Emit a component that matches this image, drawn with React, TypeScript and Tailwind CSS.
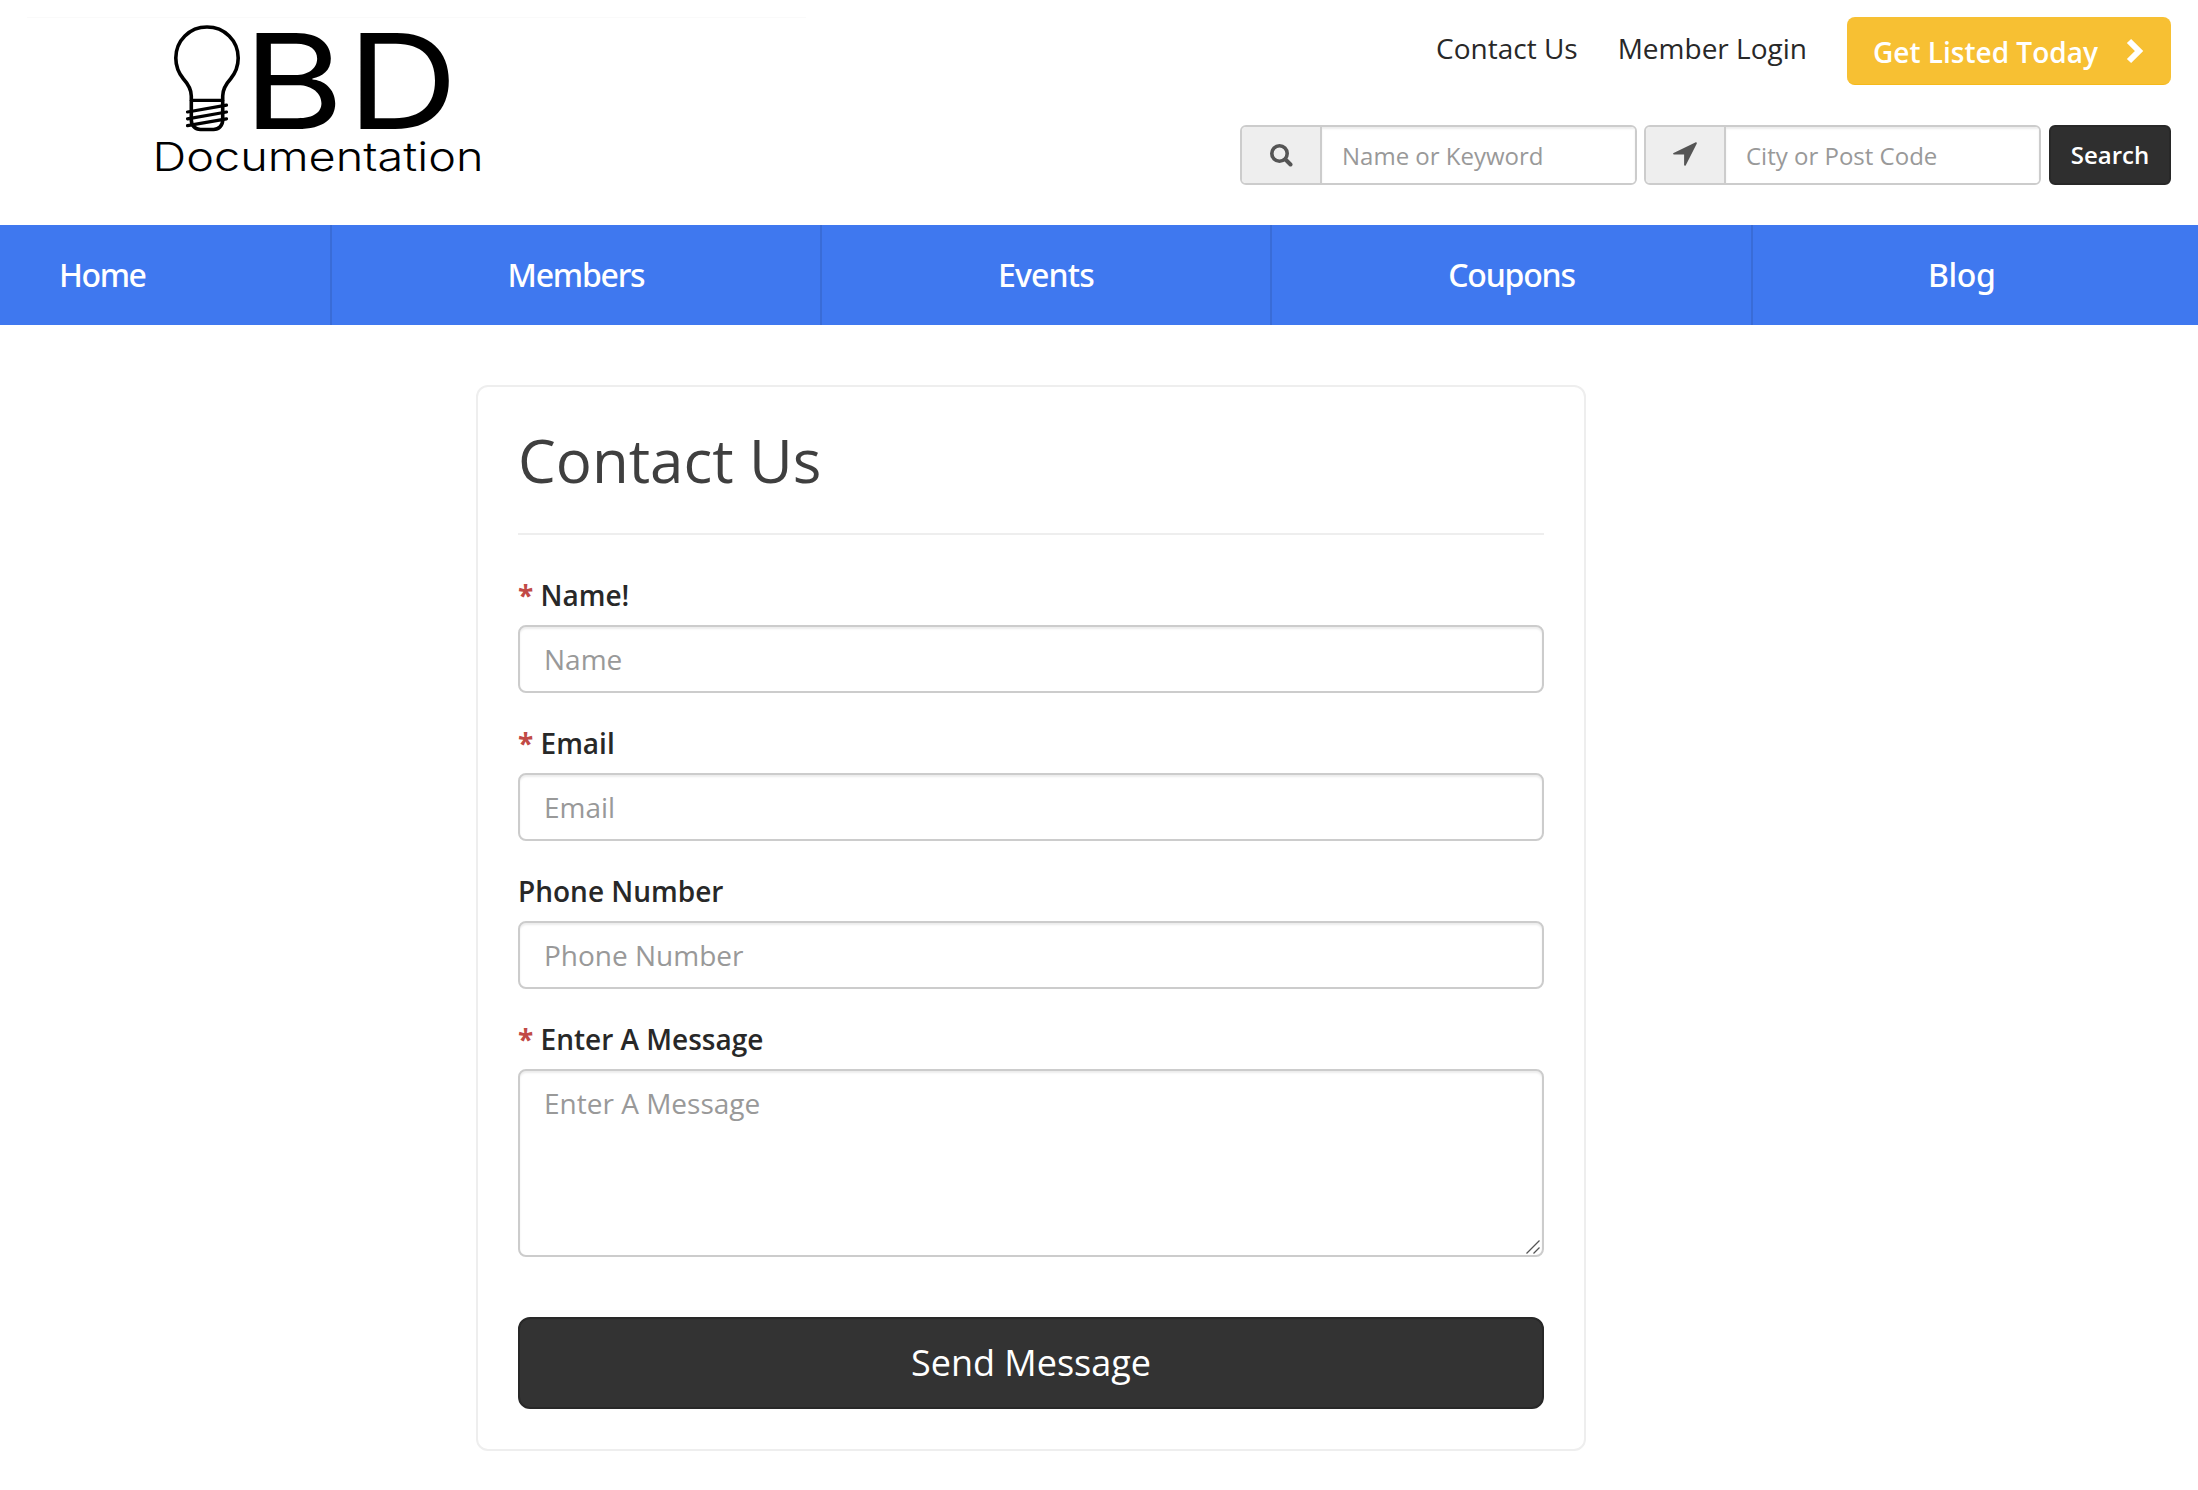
import React from 'react';

const navItems = [
  { label: 'Home', cell: 'w-[332px] pl-[59px] border-r-2', text: 'tracking-[-1.4px]' },
  { label: 'Members', cell: 'w-[490px] justify-center border-r-2', text: 'tracking-[-1.2px]' },
  { label: 'Events', cell: 'w-[450px] justify-center border-r-2', text: 'tracking-[-0.8px]' },
  { label: 'Coupons', cell: 'w-[481px] justify-center border-r-2', text: 'tracking-[-1.2px]' },
  { label: 'Blog', cell: 'flex-1 pl-[175px]', text: 'tracking-[-0.4px]' },
];

const fields = [
  { label: 'Name!', placeholder: 'Name', required: true },
  { label: 'Email', placeholder: 'Email', required: true },
  { label: 'Phone Number', placeholder: 'Phone Number', required: false },
];

function Logo() {
  return (
    <svg width="360" height="172" viewBox="0 8 360 172" className="block overflow-visible" fill="none">
      {/* Bulb */}
      <g stroke="#000" strokeWidth="3.6" strokeLinecap="round" strokeLinejoin="round">
        <path d="M51.3 90V86C51.3 79 48.500 74.500 43.500 69C38.500 63 35.800 56 35.800 48C35.800 30.500 49.500 17 67 17S98.200 30.500 98.200 48C98.200 56 95.500 63 90.500 69C85.500 74.500 82.700 79 82.700 86V110C82.700 115.500 79 119.500 73.500 119.500H60.500C55 119.500 51.300 115.500 51.300 110V90" />
        <path d="M51.3 90.400H82.700" strokeWidth="3.2" />
        <path d="M47.500 102L86.500 95.200M47.500 108.800L86.500 102M47.500 115.700L86.500 108.800" strokeWidth="3.2" />
      </g>
      <g fill="#000" className="font-['Inter']">
        <text x="103" y="119" fontSize="132" textLength="101" lengthAdjust="spacingAndGlyphs">B</text>
        <text x="207" y="119" fontSize="132" textLength="111" lengthAdjust="spacingAndGlyphs">D</text>
        <text x="12.500" y="161" fontSize="40" fontWeight="350" textLength="331" lengthAdjust="spacingAndGlyphs">Documentation</text>
      </g>
    </svg>
  );
}

function SearchInput({ icon, placeholder }: { icon: React.ReactNode; placeholder: string }) {
  return (
    <div className="flex w-[397px] h-[60px] rounded-[6px] border-2 border-[#ccc] overflow-hidden">
      <span className="w-[80px] shrink-0 flex items-center justify-center bg-[#eee] border-r-2 border-[#ccc]">
        {icon}
      </span>
      <input
        type="text"
        placeholder={placeholder}
        className="flex-1 min-w-0 px-5 pt-[2px] text-[24px] bg-white placeholder:text-[#999] shadow-[inset_0_2px_2px_rgba(0,0,0,0.075)] outline-none"
      />
    </div>
  );
}

function Header() {
  return (
    <header className="flex justify-between h-[225px] pr-[27px]">
      <div className="ml-[27px] mt-[17px] w-[779px] pl-[113px] border-t border-[#fafafa]">
        <Logo />
      </div>
      <div className="flex flex-col items-end pt-[17px]">
        <div className="flex h-[68px] text-[28px]">
          <a className="mt-[11px] mr-[40px] leading-[40px]">Contact Us</a>
          <a className="mt-[11px] mr-[40px] leading-[40px]">Member Login</a>
          <button className="flex items-center w-[324px] h-[68px] pl-[26px] rounded-[8px] bg-[#f7c033] border-b border-[#f5b91b] text-white font-semibold leading-[40px] whitespace-nowrap">
            <span className="w-[225px] pt-[2px] text-left">Get Listed Today</span>
            <svg width="18" height="26" viewBox="0 0 18 26" className="ml-[28px]" fill="none">
              <path d="M3 3L13 13L3 23" stroke="#fff" strokeWidth="6" />
            </svg>
          </button>
        </div>

        <div className="flex mt-[40px]">
          <SearchInput
            placeholder="Name or Keyword"
            icon={
              <svg width="24" height="24" viewBox="0 0 24 24" fill="none" stroke="#555">
                <circle cx="10.500" cy="10.500" r="7.700" strokeWidth="3.600" />
                <path d="M16.500 16.500L21.500 21.500" strokeWidth="4" strokeLinecap="round" />
              </svg>
            }
          />
          <div className="w-[7px]" />
          <SearchInput
            placeholder="City or Post Code"
            icon={
              <svg width="24" height="24" viewBox="0 0 24 24" className="-mt-[3px]" fill="#555">
                <path d="M23.500 0.500C23.900 0.800 23.900 1.200 23.700 1.700L12.800 23.200C12.300 24 11.200 23.800 11.100 22.900V12.600H1C0 12.400 -0.200 11.500 0.600 11L22.300 0.400C22.800 0.200 23.200 0.200 23.500 0.500Z" />
              </svg>
            }
          />
          <button className="ml-[8px] w-[122px] h-[60px] rounded-[6px] bg-[#2f2f2f] border-2 border-[#282828] text-white text-[24px] font-semibold">
            Search
          </button>
        </div>
      </div>
    </header>
  );
}

function NavBar() {
  return (
    <nav className="flex h-[100px] bg-[#3f78ef] text-white text-[32px] font-medium font-['Noto_Sans']">
      {navItems.map((item) => (
        <a key={item.label} className={`flex items-center border-[#396cd7] ${item.cell}`}>
          <span className={item.text}>{item.label}</span>
        </a>
      ))}
    </nav>
  );
}

function FieldLabel({ label, required }: { label: string; required: boolean }) {
  return (
    <label className="block mb-[10px] text-[28px] leading-[40px] font-semibold">
      {required && <span className="font-bold text-[#c14a46]">* </span>}
      {label}
    </label>
  );
}

function ContactForm() {
  return (
    <form className="w-[1110px] h-[1066px] ml-[476px] mt-[60px] px-[40px] border-2 border-[#eee] rounded-[12px]">
      <h1 className="h-[146px] pt-[32px] text-[60px] leading-[82px] text-[#3f3f3f]">Contact Us</h1>
      <hr className="border-0 h-[2px] bg-[#eee] mb-[40px]" />

      {fields.map((field) => (
        <div key={field.label} className="mb-[30px]">
          <FieldLabel label={field.label} required={field.required} />
          <input
            type="text"
            placeholder={field.placeholder}
            className="block w-full h-[68px] px-[24px] text-[28px] rounded-[8px] border-2 border-[#ccc] placeholder:text-[#999] shadow-[inset_0_2px_2px_rgba(0,0,0,0.075)] outline-none"
          />
        </div>
      ))}

      <FieldLabel label="Enter A Message" required />
      <div className="relative">
        <textarea
          placeholder="Enter A Message"
          className="block w-full h-[188px] px-[24px] py-[12px] text-[28px] leading-[40px] resize-none rounded-[8px] border-2 border-[#ccc] placeholder:text-[#999] shadow-[inset_0_2px_2px_rgba(0,0,0,0.075)] outline-none"
        />
        {/* Resize grip */}
        <svg width="14" height="14" viewBox="0 0 14 14" className="absolute right-[4px] bottom-[3px]" stroke="#555" strokeWidth="1.300">
          <path d="M0.500 13.500L13.500 0.500M7.500 13.500L13.500 7.500" />
        </svg>
      </div>

      <button className="block w-full h-[92px] mt-[60px] rounded-[12px] bg-[#333] border-2 border-[#282828] text-white text-[36px]">
        Send Message
      </button>
    </form>
  );
}

export default function App() {
  return (
    <div className="w-[2198px] h-[1490px] overflow-hidden bg-white text-[#282828] font-['Open_Sans',sans-serif]">
      <Header />
      <NavBar />
      <ContactForm />
    </div>
  );
}
